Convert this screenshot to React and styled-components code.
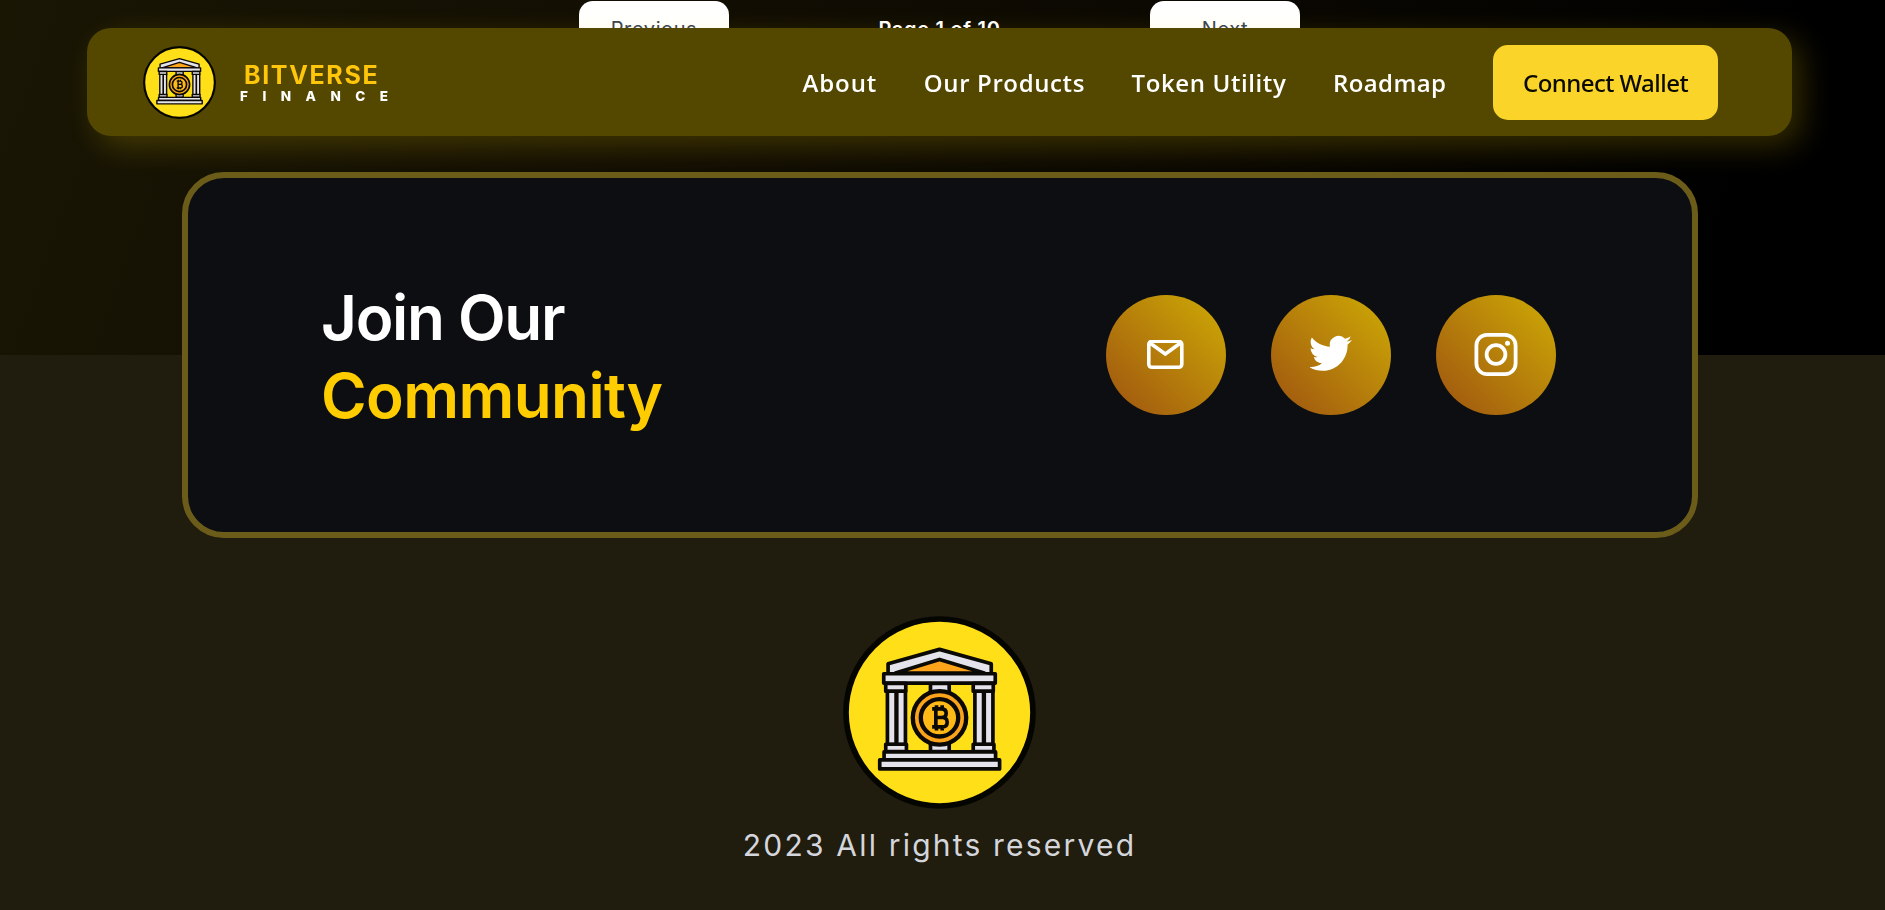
import React from 'react';
import styled, { createGlobalStyle } from 'styled-components';

const GlobalStyle = createGlobalStyle`
  *, *::before, *::after { box-sizing: border-box; }
  html, body { margin: 0; background: #201c0e; }
  body { font-family: Inter, 'Liberation Sans', sans-serif; color: #fff; }
`;

const Page = styled.div`
  width: 100%;
  height: 910px;
  overflow: hidden;
`;

const ListSection = styled.section`
  height: 355px;
  padding: 1px 6px 0 0;
  background: linear-gradient(110deg, #191604 0%, #141003 24%, #0b0802 60%, #000 90%);
`;

const Pager = styled.div`
  width: 721px;
  margin: 0 auto;
  display: flex;
  align-items: center;
  justify-content: space-between;
`;

const PagerButton = styled.button`
  width: 150px;
  height: 57px;
  padding: 0;
  border: 0;
  border-radius: 14px;
  background: #fff;
  color: #374151;
  font: 400 20px/57px Inter, sans-serif;
  letter-spacing: 0.6px;
`;

const PageCount = styled.span`
  font: 600 20px/57px Inter, sans-serif;
  letter-spacing: 0.7px;
`;

const Nav = styled.nav`
  position: fixed;
  top: 28px;
  left: 87px;
  width: 1705px;
  height: 108px;
  padding: 0 74px 0 56px;
  display: flex;
  align-items: center;
  border-radius: 24px;
  background: #544800;
  box-shadow: 10px 10px 30px rgba(255, 217, 0, 0.2);
`;

const Brand = styled.a`
  display: flex;
  align-items: center;
  gap: 24px;
`;

const BrandText = styled.div`
  display: flex;
  flex-direction: column;
`;

const BrandName = styled.span`
  padding-left: 4px;
  color: #ffc60b;
  font-size: 25px;
  font-weight: 700;
  line-height: 26px;
  letter-spacing: 1.65px;
`;

const BrandSub = styled.span`
  padding-top: 1px;
  font-size: 13.5px;
  font-weight: 800;
  line-height: 14px;
  letter-spacing: 14.5px;
`;

const NavRight = styled.div`
  margin-left: auto;
  display: flex;
  align-items: center;
  gap: 46.6px;
  font-family: 'Open Sans', 'Noto Sans', sans-serif;
  font-size: 24px;
`;

const NavLink = styled.a`
  color: #fff;
  font-weight: 600;
  letter-spacing: ${(p) => p.$spacing};
  white-space: nowrap;
`;

const WalletButton = styled.button`
  width: 225px;
  height: 75px;
  padding: 0;
  border: 0;
  border-radius: 15px;
  background: #fad428;
  color: #0a0a00;
  font: 500 24px 'Noto Sans', 'Open Sans', sans-serif;
  letter-spacing: -0.55px;
  white-space: nowrap;
`;

const FooterSection = styled.footer`
  height: 554px;
  padding-right: 5px;
  display: flex;
  flex-direction: column;
  align-items: center;
  background: #201c0e;
`;

const CommunityCard = styled.section`
  width: 1516px;
  height: 366px;
  flex: none;
  margin-top: -183px;
  padding: 0 136px 0 133px;
  display: flex;
  align-items: center;
  justify-content: space-between;
  border: 6px solid #6b5c19;
  border-radius: 42px;
  background: #0c0e12;
`;

const Heading = styled.h2`
  margin: 3px 0 0;
  display: flex;
  flex-direction: column;
  font: 600 62px/78px Inter, sans-serif;
`;

const HeadingLine = styled.span`
  color: ${(p) => (p.$accent ? '#ffcc00' : '#fff')};
  letter-spacing: ${(p) => p.$spacing};
`;

const SocialRow = styled.div`
  display: flex;
  gap: 45px;
`;

const SocialLink = styled.a`
  width: 120px;
  height: 120px;
  display: grid;
  place-items: center;
  border-radius: 50%;
  background: linear-gradient(to top right, #a0570f 5%, #b67f0b 50%, #cca705 95%);
`;

const FooterLogo = styled.div`
  margin: 78px 2px 0 0;
  height: 193px;
`;

const Copyright = styled.p`
  margin: 17px 1px 0 0;
  color: #d4d6dc;
  font-size: 30px;
  line-height: 38px;
  letter-spacing: 2.2px;
`;

function BankLogo({ size }) {
  return (
    <svg width={size} height={size} viewBox="39 34 578 578" style={{ display: 'block' }}>
      <circle cx="328" cy="323" r="280" fill="#ffdf17" stroke="#050500" strokeWidth="17" />
      <g stroke="#0b0906" strokeWidth="11" fill="#e4e2ea" strokeLinejoin="round">
        <rect x="301" y="236" width="56" height="204" />
        <path d="M174 207V177L328 134L483 177V207Z" />
        <path d="M196 205L328 164L462 205Z" fill="#ffa31a" />
        <rect x="161" y="207" width="334" height="28" />
        {[170, 432].map((x) => (
          <g key={x}>
            <rect x={x + 2} y="257" width="54" height="162" />
            <path d={`M${x + 29} 257V419`} strokeWidth="13" />
            <rect x={x - 3} y="236" width="60" height="23" />
            <rect x={x - 3} y="418" width="62" height="22" />
          </g>
        ))}
        <rect x="162" y="441" width="334" height="24" />
        <rect x="149" y="465" width="359" height="27" />
        <circle cx="328" cy="339" r="80" fill="#fba31a" strokeWidth="13" />
        <circle cx="328" cy="339" r="56" fill="#ffb916" strokeWidth="13" />
      </g>
      <g fill="none" stroke="#0b0906" strokeWidth="11">
        <path d="M306 312H334Q348 312 348 325T334 338H316H337Q351 338 351 352T337 366H306M317 312V366M319 301V312M336 301V312M319 366V377M336 366V377" />
      </g>
    </svg>
  );
}

function MailIcon() {
  return (
    <svg width="38" height="30" viewBox="0.5 0.5 38 30" fill="none" stroke="#fff" strokeWidth="3.6">
      <rect x="2.3" y="1.8" width="33" height="26" rx="3" />
      <path d="M3.5 3.5L18.8 14.5L34 3.5" />
    </svg>
  );
}

function TwitterIcon() {
  return (
    <svg width="43" height="43" viewBox="0.6 1.2 24 24" fill="#fff">
      <path d="M23.953 4.57a10 10 0 01-2.825.775 4.958 4.958 0 002.163-2.723c-.951.555-2.005.959-3.127 1.184a4.92 4.92 0 00-8.384 4.482C7.69 8.095 4.067 6.13 1.64 3.162a4.822 4.822 0 00-.666 2.475c0 1.71.87 3.213 2.188 4.096a4.904 4.904 0 01-2.228-.616v.06a4.923 4.923 0 003.946 4.827 4.996 4.996 0 01-2.212.085 4.936 4.936 0 004.604 3.417 9.867 9.867 0 01-6.102 2.105c-.39 0-.779-.023-1.17-.067a13.995 13.995 0 007.557 2.209c9.053 0 13.998-7.496 13.998-13.985 0-.21 0-.42-.015-.63A9.935 9.935 0 0024 4.59z" />
    </svg>
  );
}

function InstagramIcon() {
  return (
    <svg width="44" height="44" viewBox="0 0.5 44 44" fill="none" stroke="#fff" strokeWidth="3.8">
      <rect x="2.4" y="2.4" width="39.2" height="39.2" rx="10.5" />
      <circle cx="22" cy="22" r="9.4" />
      <circle cx="33.5" cy="10.7" r="2.5" fill="#fff" stroke="none" />
    </svg>
  );
}

export default function App() {
  return (
    <Page>
      <GlobalStyle />
      <ListSection>
        <Pager>
          <PagerButton>Previous</PagerButton>
          <PageCount>Page 1 of 10</PageCount>
          <PagerButton>Next</PagerButton>
        </Pager>
      </ListSection>
      <FooterSection>
        <CommunityCard>
          <Heading>
            <HeadingLine $spacing="-1.3px">Join Our</HeadingLine>
            <HeadingLine $accent $spacing="-0.6px">Community</HeadingLine>
          </Heading>
          <SocialRow>
            <SocialLink><MailIcon /></SocialLink>
            <SocialLink><TwitterIcon /></SocialLink>
            <SocialLink><InstagramIcon /></SocialLink>
          </SocialRow>
        </CommunityCard>
        <FooterLogo><BankLogo size={193} /></FooterLogo>
        <Copyright>2023 All rights reserved</Copyright>
      </FooterSection>
      <Nav>
        <Brand>
          <BankLogo size={73} />
          <BrandText>
            <BrandName>BITVERSE</BrandName>
            <BrandSub>FINANCE</BrandSub>
          </BrandText>
        </Brand>
        <NavRight>
          <NavLink $spacing="0.9px">About</NavLink>
          <NavLink $spacing="0.62px">Our Products</NavLink>
          <NavLink $spacing="0.6px">Token Utility</NavLink>
          <NavLink $spacing="0.4px">Roadmap</NavLink>
          <WalletButton>Connect Wallet</WalletButton>
        </NavRight>
      </Nav>
    </Page>
  );
}
